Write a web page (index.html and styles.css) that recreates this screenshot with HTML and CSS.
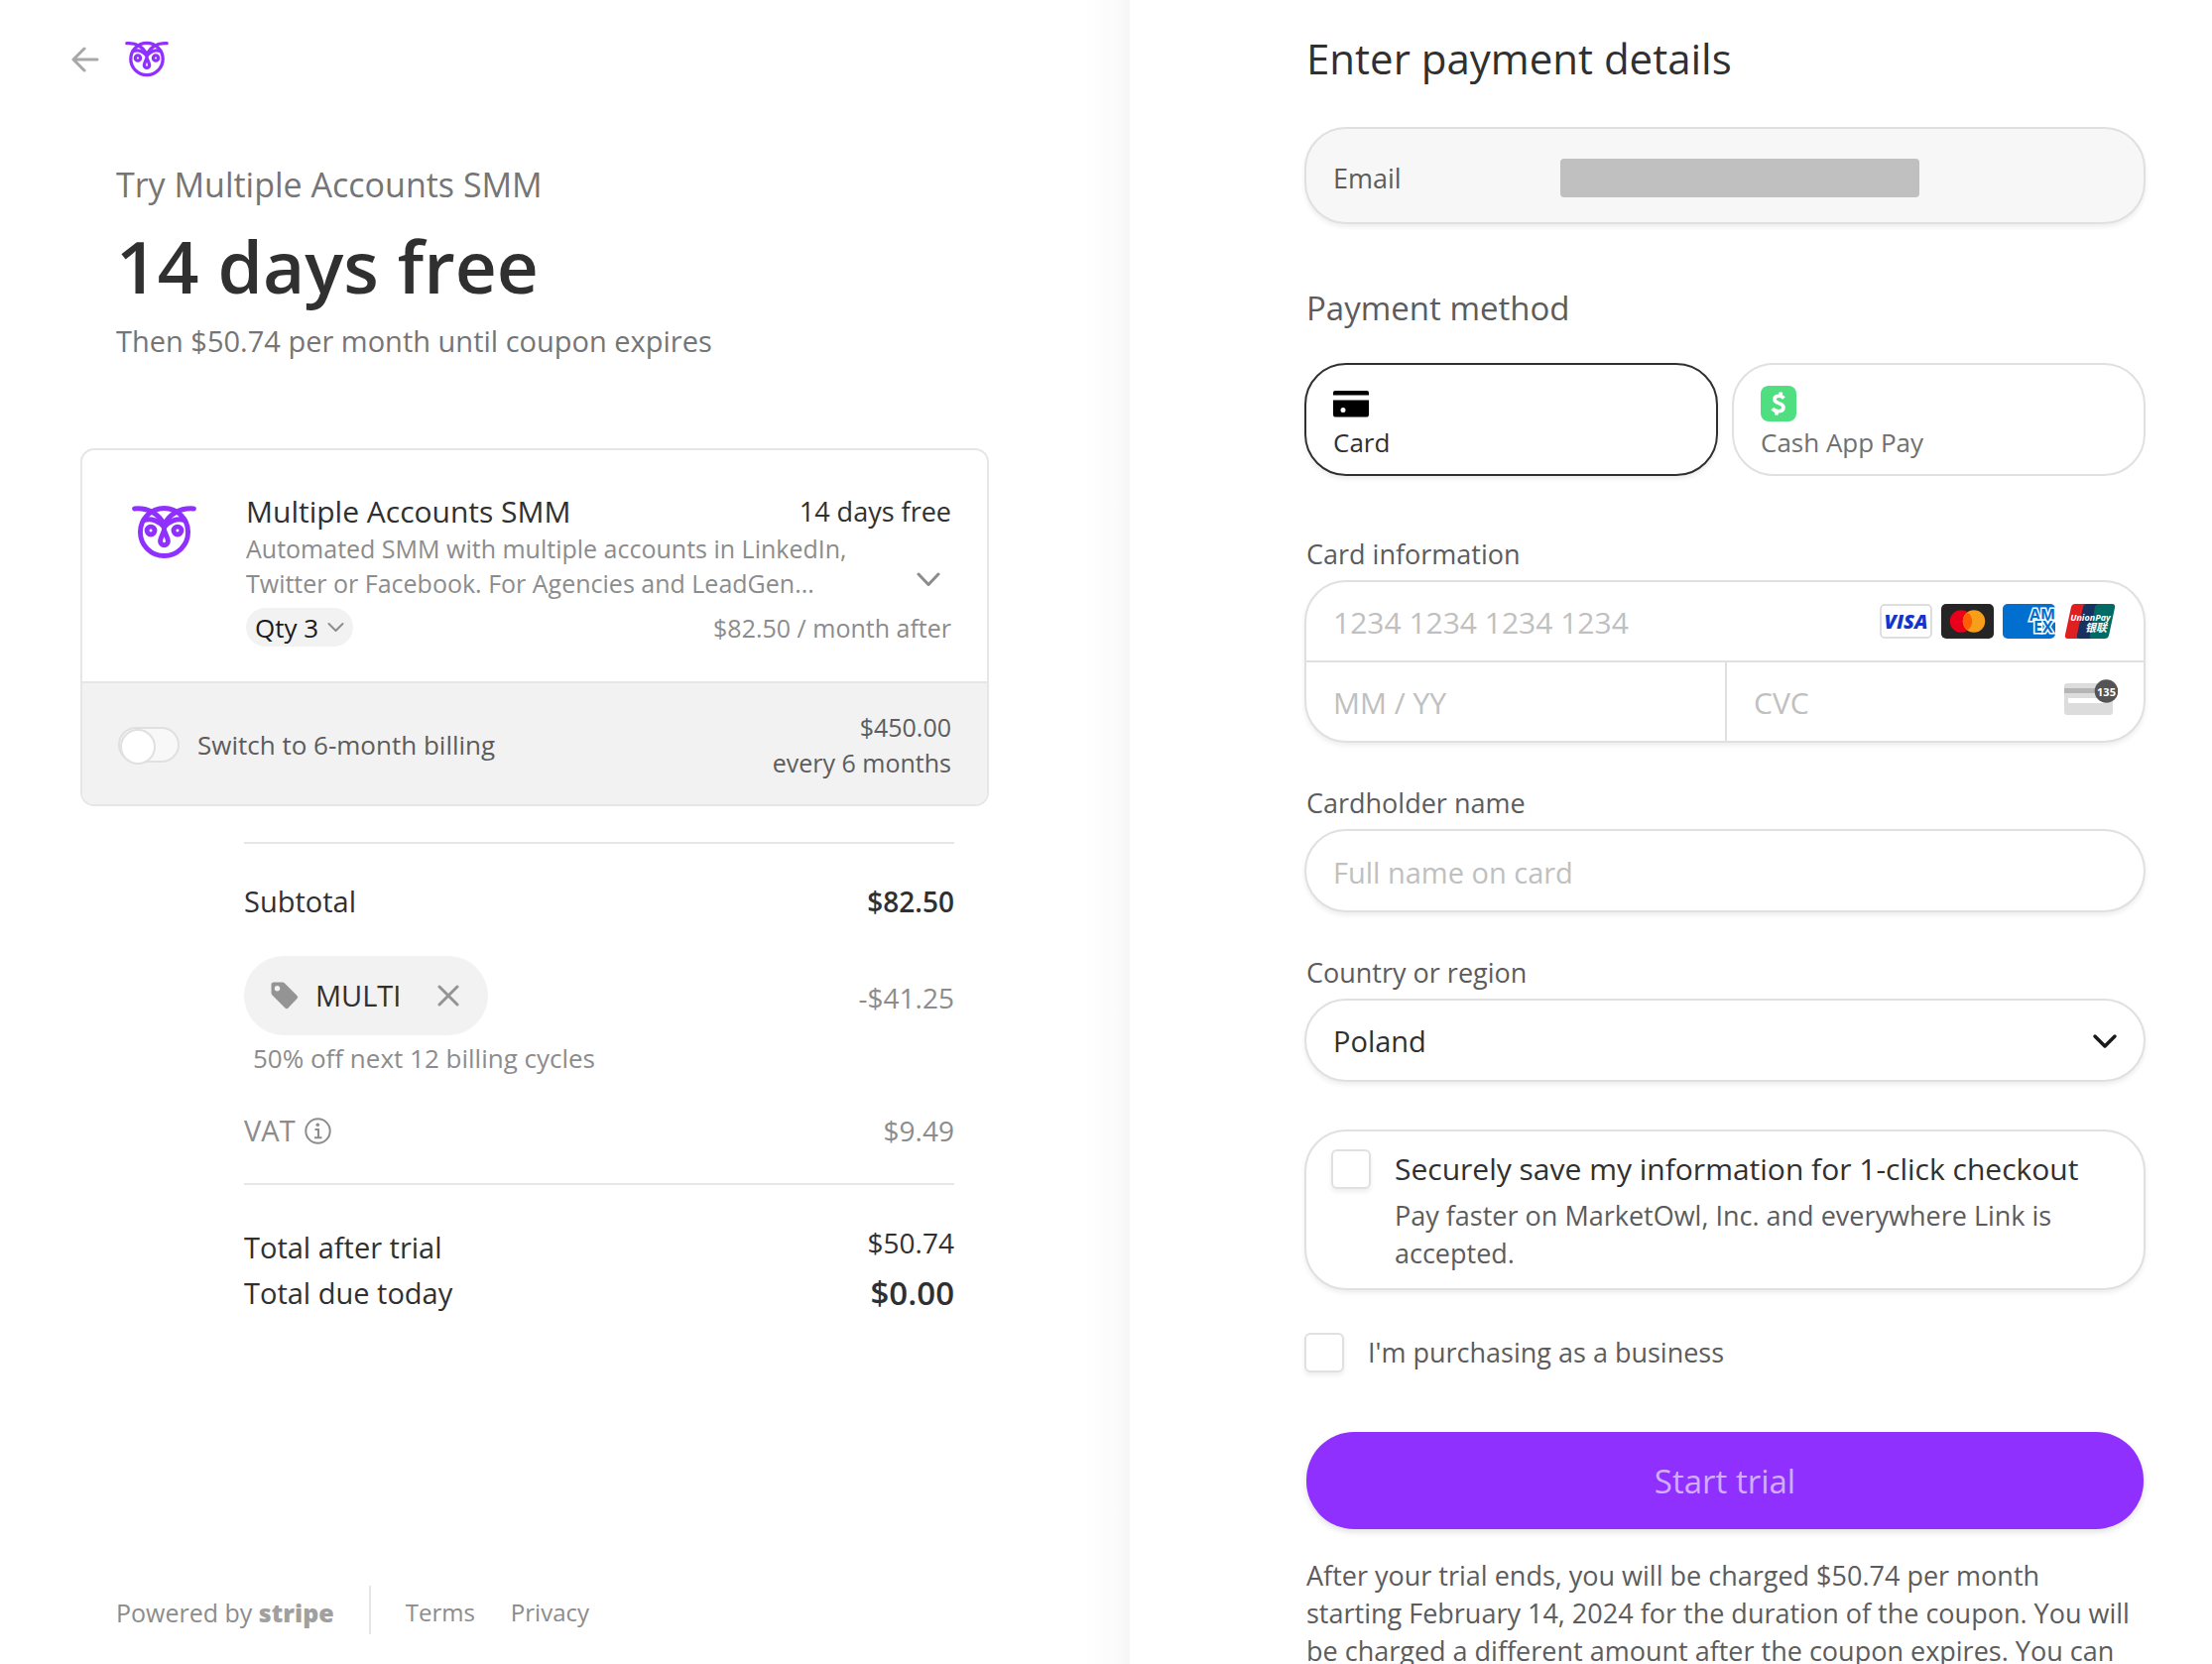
FILE: index.html
```html
<!DOCTYPE html>
<html lang="en">
<head>
  <meta charset="UTF-8">
  <meta name="viewport" content="width=device-width, initial-scale=1.0">
  <title>Checkout</title>
  <link rel="stylesheet" href="styles.css">
</head>
<body>

  <!-- Owl logo, used in header and product card -->
  <svg class="sprite" aria-hidden="true">
    <symbol id="owl" viewBox="0 0 66 56">
      <g fill="none" stroke="#8f30ff" stroke-width="5" stroke-linecap="round">
        <circle cx="33" cy="28" r="24.5"/>
        <path d="M2.500 4C16 3 26 8 33 20C40 8 50 3 63.500 4"/>
        <path d="M12 16C20 13 28 17 33 23C38 17 46 13 54 16"/>
        <circle cx="19.300" cy="26.500" r="4"/>
        <circle cx="46.700" cy="26.500" r="4"/>
        <path d="M33 22V26C31 32 29 34.500 29 37.500A4 4 0 0 0 37 37.500C37 34.500 35 32 33 26" stroke-width="5"/>
      </g>
    </symbol>
  </svg>

  <div class="checkout">

    <!-- Order summary -->
    <aside class="summary">
      <header class="header">
        <a class="back" href="#" aria-label="Back">
          <svg width="28" height="26" viewBox="0 0 28 26" fill="none" stroke="#a8a8a8" stroke-width="3" stroke-linecap="round" stroke-linejoin="round"><path d="M26 13H2M13 2L2 13L13 24"/></svg>
        </a>
        <svg class="logo"><use href="#owl"/></svg>
      </header>

      <div class="intro">
        <div class="intro-name">Try Multiple Accounts SMM</div>
        <h1 class="intro-price">14 days free</h1>
        <div class="intro-then">Then $50.74 per month until coupon expires</div>
      </div>

      <div class="card">
        <div class="product">
          <svg class="product-logo"><use href="#owl"/></svg>
          <div class="product-info">
            <div class="row product-title"><span>Multiple Accounts SMM</span><span class="product-free">14 days free</span></div>
            <div class="row product-desc">
              <p>Automated SMM with multiple accounts in LinkedIn,<br>Twitter or Facebook. For Agencies and LeadGen...</p>
              <button class="expand" type="button" aria-label="Show more">
                <svg width="24" height="15" viewBox="0 0 24 15" fill="none" stroke="#8c8c8c" stroke-width="3" stroke-linecap="round" stroke-linejoin="round"><path d="M2 2L12 12.500L22 2"/></svg>
              </button>
            </div>
            <div class="row product-qty">
              <button class="qty" type="button">Qty 3
                <svg width="17" height="11" viewBox="0 0 17 11" fill="none" stroke="#8c8c8c" stroke-width="2" stroke-linecap="round" stroke-linejoin="round"><path d="M1.500 2L8.500 9L15.500 2"/></svg>
              </button>
              <span class="product-after">$82.50 / month after</span>
            </div>
          </div>
        </div>
        <div class="upsell">
          <input class="toggle" type="checkbox" role="switch" id="billing">
          <label for="billing">Switch to 6-month billing</label>
          <div class="upsell-price">$450.00<br>every 6 months</div>
        </div>
      </div>

      <div class="totals">
        <div class="row subtotal"><span>Subtotal</span><b>$82.50</b></div>
        <div class="row coupon">
          <div class="chip">
            <svg width="28" height="28" viewBox="0 0 28 28" fill="#949494"><path fill-rule="evenodd" d="M3 .5H11.500Q13 .5 14 1.500L26.500 14Q28 15.500 26.500 17L17.500 26.500Q16 28 14.500 26.500L1.500 13.500Q.5 12.500 .5 11V3Q.5 .5 3 .5ZM6.500 4A2.700 2.700 0 1 0 6.500 9.400A2.700 2.700 0 1 0 6.500 4Z"/></svg>
            <span>MULTI</span>
            <button class="remove" type="button" aria-label="Remove coupon">
              <svg width="22" height="22" viewBox="0 0 22 22" stroke="#949494" stroke-width="3" stroke-linecap="round"><path d="M2 2L20 20M20 2L2 20"/></svg>
            </button>
          </div>
          <span class="discount">-$41.25</span>
        </div>
        <div class="coupon-note">50% off next 12 billing cycles</div>
        <div class="row vat">
          <span class="vat-label">VAT
            <svg width="27" height="27" viewBox="0 0 27 27" fill="none" stroke="#8c8c8c" stroke-width="2"><circle cx="13.500" cy="13.500" r="12.200"/><path d="M10.500 12H14V20M10 20.200H17.500"/><circle cx="13.300" cy="7.300" r="1.800" fill="#8c8c8c" stroke="none"/></svg>
          </span>
          <span class="vat-amount">$9.49</span>
        </div>
        <div class="due">
          <div class="row"><span>Total after trial</span><span class="after">$50.74</span></div>
          <div class="row"><span>Total due today</span><b class="today">$0.00</b></div>
        </div>
      </div>

      <footer class="footer">
        <a class="powered" href="#">Powered by <b>stripe</b></a>
        <div class="footer-links">
          <a href="#">Terms</a>
          <a href="#">Privacy</a>
        </div>
      </footer>
    </aside>

    <!-- Payment form -->
    <form class="payment">
      <h2>Enter payment details</h2>

      <div class="email box">
        <span>Email</span>
        <div class="email-value"></div>
      </div>

      <h3>Payment method</h3>
      <div class="methods">
        <button class="method box active" type="button">
          <svg width="36" height="36" viewBox="0 0 36 36"><path d="M2 5H34Q36 5 36 7V9.500H0V7Q0 5 2 5Z"/><path fill-rule="evenodd" d="M0 14.500H36V29Q36 31.500 34 31.500H2Q0 31.500 0 29ZM10 22A2.500 2.500 0 1 0 10 27A2.500 2.500 0 1 0 10 22Z"/></svg>
          Card
        </button>
        <button class="method box" type="button">
          <svg width="36" height="36" viewBox="0 0 36 36"><rect width="36" height="36" rx="8" fill="#4fde80"/><path d="M23.500 12.500C21 9.500 14 9.200 14 13.800C14 18.800 23 16.500 23 21.800C23 27 15 26.800 11.800 23M20.500 6.500L19.700 10.500M16.500 25.500L15.700 29.500" fill="none" stroke="#fff" stroke-width="3.600"/></svg>
          Cash App Pay
        </button>
      </div>

      <label class="label first" for="number">Card information</label>
      <div class="card-box box">
        <div class="card-row">
          <input id="number" type="text" placeholder="1234 1234 1234 1234">
          <div class="brands">
            <svg width="53" height="35" viewBox="0 0 53 35"><rect x="1" y="1" width="51" height="33" rx="4" fill="#fff" stroke="#d4d4d4" stroke-width="1.500"/><text class="visa" x="26.500" y="25" text-anchor="middle">VISA</text></svg>
            <svg width="53" height="35" viewBox="0 0 53 35"><rect width="53" height="35" rx="5" fill="#252525"/><circle cx="20" cy="17.500" r="11.200" fill="#eb001b"/><circle cx="33" cy="17.500" r="11.200" fill="#f79e1b"/><path d="M26.500 8.400A11.200 11.200 0 0 1 26.500 26.600A11.200 11.200 0 0 1 26.500 8.400Z" fill="#ff5f00"/></svg>
            <svg width="53" height="35" viewBox="0 0 53 35"><rect width="53" height="35" rx="5" fill="#016fd0"/><text class="amex"><tspan x="27" y="17">AM</tspan><tspan x="31" y="29">EX</tspan></text></svg>
            <svg width="53" height="35" viewBox="0 0 53 35"><path d="M11 0H26L19 35H4Q0 35 1 31L7 3Q8 0 11 0Z" fill="#e02020"/><path d="M23 0H37L30 35H16Q12 35 13 31L19 3Q20 0 23 0Z" fill="#17325f"/><path d="M35 0H48Q52 0 51 4L45 32Q44 35 41 35H28Q25 35 26 31L31 3Q32 0 35 0Z" fill="#006a65"/><text class="union" text-anchor="middle"><tspan x="26.500" y="17">UnionPay</tspan><tspan class="union-cn" x="32" y="28">银联</tspan></text></svg>
          </div>
        </div>
        <div class="card-row split">
          <input type="text" placeholder="MM / YY" aria-label="Expiration">
          <div class="cvc">
            <input type="text" placeholder="CVC" aria-label="CVC">
            <svg width="54" height="36" viewBox="0 0 54 36"><rect y="4" width="49" height="32" rx="3" fill="#dcdcdc"/><rect y="9" width="49" height="5" fill="#b5b5b5"/><rect x="4" y="19" width="40" height="5" rx="1" fill="#fff"/><circle cx="42.500" cy="12" r="11.800" fill="#545454"/><text class="cvc-digits" x="42.500" y="16.500" text-anchor="middle">135</text></svg>
          </div>
        </div>
      </div>

      <label class="label" for="name">Cardholder name</label>
      <input class="field box" id="name" type="text" placeholder="Full name on card">

      <label class="label" for="country">Country or region</label>
      <div class="select">
        <select class="field box" id="country"><option>Poland</option></select>
        <svg width="26" height="17" viewBox="0 0 26 17" fill="none" stroke="#1a1a1a" stroke-width="3.500" stroke-linecap="round" stroke-linejoin="round"><path d="M3 3L13 13L23 3"/></svg>
      </div>

      <div class="save box">
        <input class="check" type="checkbox" id="save">
        <div>
          <label class="save-title" for="save">Securely save my information for 1-click checkout</label>
          <p>Pay faster on MarketOwl, Inc. and everywhere Link is accepted.</p>
        </div>
      </div>

      <div class="business">
        <input class="check" type="checkbox" id="business">
        <label for="business">I'm purchasing as a business</label>
      </div>

      <button class="submit" type="submit">Start trial</button>
      <p class="terms">After your trial ends, you will be charged $50.74 per month<br>starting February 14, 2024 for the duration of the coupon. You will be charged a different amount after the coupon expires. You can</p>
    </form>
  </div>

</body>
</html>
```
FILE: styles.css
```css
* {
  box-sizing: border-box;
}
body {
  margin: 0;
  background-color: #fff;
  color: #303030;
  font-family: "Open Sans", "Noto Sans", sans-serif;
  font-size: 29px;
  line-height: 40px;
}
h1, h2, h3, p {
  margin: 0;
}
a {
  color: inherit;
  text-decoration: none;
}
button, input, select {
  font: inherit;
  color: inherit;
}
button {
  border: none;
  padding: 0;
  background: none;
  cursor: pointer;
}
svg {
  display: block;
  flex: none;
}
.sprite {
  position: absolute;
  width: 0;
  height: 0;
}
.checkout {
  display: grid;
  grid-template-columns: minmax(0, 1139fr) minmax(0, 1091fr);
  grid-template-rows: 100vh;
  overflow: hidden;
}
.row {
  display: flex;
  justify-content: space-between;
}

/* Order summary */
.summary {
  display: flex;
  flex-direction: column;
  padding: 41px 142px 30px 72px;
  background: linear-gradient(to left, #f6f6f6, #fcfcfc 16px, #fff 50px);
}
.header {
  display: flex;
  align-items: center;
  gap: 26px;
}
.logo {
  width: 44px;
  height: 37px;
}
.intro {
  margin: 86px 0 88px 45px;
  color: #757575;
}
.intro-name {
  font-size: 34px;
  line-height: 44px;
}
.intro-price {
  margin: 16px 0 12px;
  color: #303030;
  font-size: 73px;
  line-height: 88px;
  font-weight: 600;
}
.intro-then {
  font-size: 29px;
}
.card {
  margin-left: 9px;
  border: 2px solid #e6e6e6;
  border-radius: 14px;
  font-size: 26px;
  line-height: 36px;
  overflow: hidden;
}
.product {
  display: flex;
  gap: 50px;
  padding: 42px 36px 35px 50px;
}
.product-logo {
  width: 65px;
  height: 55px;
  margin-top: 13px;
}
.product-info {
  flex: 1;
  color: #8c8c8c;
}
.product-title {
  color: #303030;
  font-size: 30px;
  line-height: 40px;
}
.product-free {
  font-size: 27px;
}
.product-desc {
  align-items: center;
  font-size: 25px;
  line-height: 35px;
}
.product-desc p {
  white-space: nowrap;
}
.expand {
  padding: 27px 11px 0;
}
.product-qty {
  align-items: center;
  margin-top: 7px;
}
.product-after {
  font-size: 25px;
}
.qty {
  display: flex;
  align-items: center;
  gap: 9px;
  height: 39px;
  padding: 0 9px;
  border-radius: 20px;
  background-color: #f2f2f2;
  color: #1a1a1a;
}
.upsell {
  display: flex;
  align-items: center;
  gap: 18px;
  padding: 26px 36px 24px;
  border-top: 2px solid #e6e6e6;
  background-color: #f2f2f2;
  color: #5c5c5c;
}
.upsell-price {
  margin-left: auto;
  font-size: 25px;
  text-align: right;
}
.toggle {
  appearance: none;
  display: flex;
  width: 62px;
  height: 36px;
  margin: 0;
  border: 2px solid #e0e0e0;
  border-radius: 18px;
  background-color: #f8f8f8;
}
.toggle::before {
  content: "";
  width: 32px;
  height: 32px;
  border: 2px solid #e0e0e0;
  border-radius: 50%;
  background-color: #fff;
}
.totals {
  margin: 36px 35px 0 174px;
  border-top: 2px solid #e6e6e6;
}
.totals b {
  font-size: 28px;
  font-weight: 600;
}
.subtotal {
  margin: 38px 0 35px;
}
.coupon {
  align-items: center;
  color: #8c8c8c;
}
.chip {
  display: flex;
  align-items: center;
  height: 80px;
  padding: 0 29px 0 27px;
  border-radius: 40px;
  background-color: #f2f2f2;
  color: #303030;
}
.chip span {
  margin: 0 37px 0 17px;
}
.discount {
  padding-top: 4px;
  font-size: 28px;
}
.coupon-note {
  margin: 5px 0 35px 9px;
  color: #8c8c8c;
  font-size: 26px;
  line-height: 36px;
}
.vat {
  color: #8c8c8c;
}
.vat-label {
  display: flex;
  align-items: center;
  gap: 9px;
}
.vat-amount {
  font-size: 28px;
}
.due {
  margin-top: 33px;
  padding-top: 40px;
  border-top: 2px solid #e6e6e6;
  line-height: 46px;
}
.after {
  font-size: 28px;
  line-height: 36px;
}
.totals .today {
  font-size: 33px;
}
.footer {
  display: flex;
  align-items: center;
  margin: auto 0 0 45px;
  color: #8c8c8c;
  font-size: 25px;
}
.powered {
  padding: 4px 35px 0 0;
}
.powered b {
  color: #a0a0a0;
  font-weight: 800;
}
.footer-links {
  display: flex;
  align-items: center;
  gap: 36px;
  height: 49px;
  padding: 4px 0 0 35px;
  border-left: 2px solid #e6e6e6;
  font-size: 24px;
}

/* Payment form */
.payment {
  padding: 31px 67px 0 176px;
  color: #5c5c5c;
  font-size: 27px;
}
.payment h2 {
  margin: 0 2px 41px;
  color: #303030;
  font-size: 42px;
  line-height: 56px;
  font-weight: 400;
}
.payment h3 {
  margin: 63px 2px 33px;
  font-size: 33px;
  line-height: 44px;
  font-weight: 400;
}
.box {
  border: 2px solid #e0e0e0;
  border-radius: 42px;
  background-color: #fff;
  box-shadow: 0 3px 5px rgba(0, 0, 0, 0.07);
}
.email {
  display: flex;
  align-items: center;
  height: 98px;
  padding: 5px 27px 0;
  background-color: #f7f7f7;
}
.email span {
  width: 229px;
}
.email-value {
  width: 362px;
  height: 39px;
  border-radius: 4px;
  background-color: #c0c0c0;
}
.methods {
  display: flex;
  gap: 14px;
}
.method {
  display: flex;
  flex-direction: column;
  align-items: flex-start;
  flex: 1;
  gap: 3px;
  height: 114px;
  padding: 21px 27px 0;
  color: #707070;
  font-size: 26px;
  line-height: 36px;
  box-shadow: none;
}
.method.active {
  border-color: #303030;
  color: #303030;
  box-shadow: 0 3px 5px rgba(0, 0, 0, 0.07);
}
.label {
  display: block;
  margin: 43px 2px 8px;
  line-height: 36px;
}
.label.first {
  margin-top: 61px;
}
.card-box {
  overflow: hidden;
}
.card-row {
  display: flex;
  align-items: center;
  height: 79px;
  padding-right: 27px;
}
.card-row input {
  flex: 1;
  width: 0;
  min-width: 0;
  height: 79px;
  padding: 2px 27px 0;
  border: none;
  background: none;
  font-size: 30px;
  outline: none;
}
.brands {
  display: flex;
  gap: 9px;
}
.split {
  display: grid;
  grid-template-columns: 1fr 1fr;
  height: 81px;
  padding-right: 0;
  border-top: 2px solid #e0e0e0;
}
.split > input {
  width: 100%;
}
.cvc {
  display: flex;
  min-width: 0;
  padding-right: 26px;
  border-left: 2px solid #e0e0e0;
}
.cvc svg {
  margin-top: 17px;
}
::placeholder {
  color: #c0c0c0;
  opacity: 1;
}
.field {
  display: block;
  width: 100%;
  height: 84px;
  padding: 2px 27px 0;
  font-size: 29px;
}
.select {
  position: relative;
}
.select select {
  appearance: none;
  color: #303030;
}
.select svg {
  position: absolute;
  top: 35px;
  right: 28px;
  pointer-events: none;
}
.check {
  appearance: none;
  flex: none;
  width: 40px;
  height: 40px;
  margin: 0;
  border: 2px solid #e0e0e0;
  border-radius: 6px;
  background-color: #fff;
  box-shadow: 0 3px 5px rgba(0, 0, 0, 0.07);
}
.save {
  display: flex;
  gap: 24px;
  margin-top: 48px;
  padding: 18px 25px 16px;
}
.save p {
  margin-top: 8px;
  line-height: 38px;
}
.save-title {
  display: block;
  color: #303030;
  font-size: 30px;
}
.business {
  display: flex;
  align-items: center;
  gap: 24px;
  margin: 43px 0 60px;
}
.submit {
  display: block;
  width: calc(100% - 4px);
  height: 98px;
  margin: 0 2px;
  padding-top: 2px;
  border-radius: 48px;
  background-color: #8f30ff;
  color: #d2acff;
  font-size: 33px;
  box-shadow: 0 3px 6px rgba(0, 0, 0, 0.12);
}
.terms {
  margin: 28px 2px 0;
  line-height: 38px;
}

/* Card brand lettering */
.visa {
  fill: #1434cb;
  font-size: 20px;
  font-weight: 800;
  font-style: italic;
}
.amex {
  fill: #016fd0;
  stroke: #fff;
  stroke-width: 3px;
  paint-order: stroke;
  font-size: 16px;
  font-weight: 700;
}
.union {
  fill: #fff;
  font-size: 9px;
  font-weight: 700;
  font-style: italic;
}
.union-cn {
  font-family: "Noto Sans CJK SC", sans-serif;
  font-size: 11px;
}
.cvc-digits {
  fill: #fff;
  font-size: 11px;
  font-weight: 700;
}
```
